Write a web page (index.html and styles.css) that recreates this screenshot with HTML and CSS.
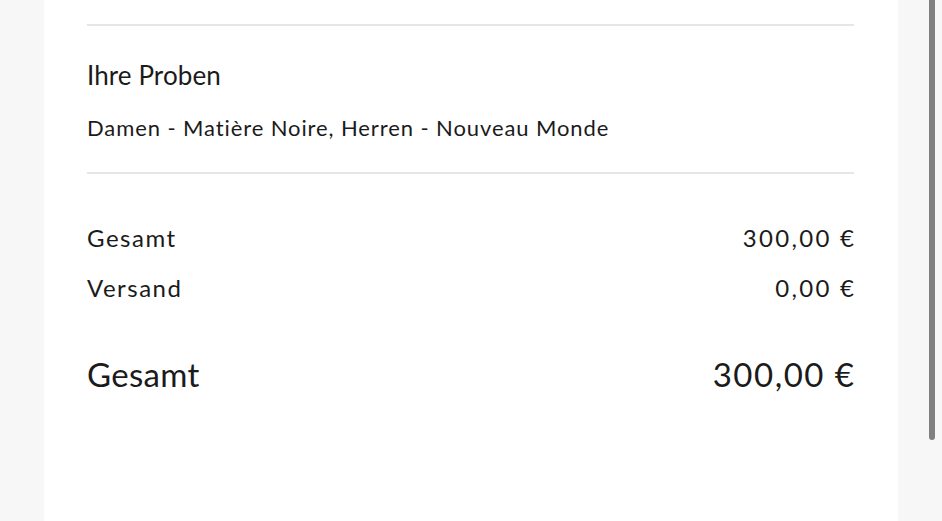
FILE: index.html
```html
<!DOCTYPE html>
<html lang="de">
<head>
<meta charset="utf-8">
<link rel="stylesheet" href="styles.css">
</head>
<body>
<main class="card">
  <hr class="divider">
  <section class="samples">
    <h2 class="samples-title">Ihre Proben</h2>
    <p class="samples-list">Damen - Matière Noire, Herren - Nouveau Monde</p>
  </section>
  <hr class="divider">
  <section class="totals">
    <div class="row"><span class="label">Gesamt</span><span class="value">300,00 €</span></div>
    <div class="row"><span class="label">Versand</span><span class="value">0,00 €</span></div>
    <div class="row row-grand"><span class="label">Gesamt</span><span class="value">300,00 €</span></div>
  </section>
</main>
<div class="scrollbar"></div>
</body>
</html>
```
FILE: styles.css
```css
html, body {
  margin: 0;
  padding: 0;
  height: 100%;
  background: #f7f7f7;
  overflow: hidden;
}
body {
  font-family: Lato, "Open Sans", sans-serif;
  font-variant-ligatures: none;
  color: #1b1b1b;
}
.card {
  margin-left: 44px;
  width: 854px;
  box-sizing: border-box;
  height: 521px;
  background: #ffffff;
  padding: 24px 44px 0 43px;
}
.divider {
  border: 0;
  height: 2px;
  background: #e6e6e6;
  margin: 0;
}
.samples {
  padding: 33px 0 30px;
}
.samples-title {
  margin: 0;
  font-weight: 400;
  font-size: 26px;
  line-height: 32px;
  letter-spacing: 0.1px;
}
.samples-list {
  margin: 23px 0 0;
  font-size: 22px;
  line-height: 28px;
  letter-spacing: 0.9px;
}
.totals {
  padding-top: 49px;
  display: flex;
  flex-direction: column;
}
.row {
  display: flex;
  justify-content: space-between;
  font-size: 24px;
  line-height: 30px;
  margin-bottom: 20px;
}
.row .label {
  letter-spacing: 1.5px;
}
.row .value {
  letter-spacing: 2.3px;
  margin-right: -2.3px;
}
.row-grand {
  font-size: 33px;
  line-height: 40px;
  margin-top: 31px;
}
.row-grand .label {
  letter-spacing: 0.3px;
}
.row-grand .value {
  letter-spacing: 1.5px;
  margin-right: -1.5px;
}
.scrollbar {
  position: absolute;
  top: 0;
  left: 929px;
  width: 6px;
  height: 440px;
  background: #808080;
  border-radius: 0 0 3px 3px;
}
```
